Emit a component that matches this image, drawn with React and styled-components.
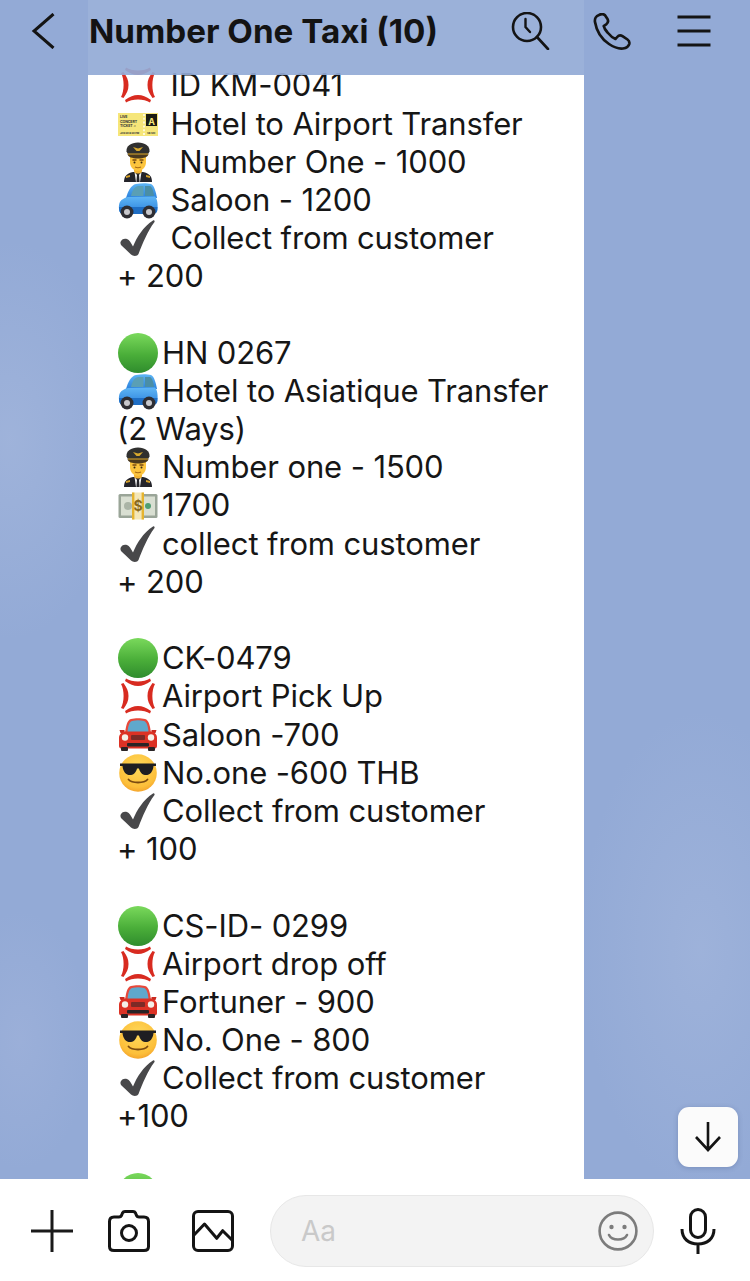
import React from "react";
import styled, { createGlobalStyle } from "styled-components";

const Global = createGlobalStyle`
  html, body { margin: 0; padding: 0; background: #93aad6; }
  * { box-sizing: border-box; }
`;

const Page = styled.div`
  width: 750px;
  height: 1281px;
  display: flex;
  flex-direction: column;
  position: relative;
  overflow: hidden;
  font-family: Inter, "Liberation Sans", sans-serif;
  color: #141414;
  background:
    radial-gradient(ellipse 110px 200px at 10px 440px, rgba(176,192,225,.4), rgba(176,192,225,0)),
    radial-gradient(ellipse 120px 240px at 700px 950px, rgba(176,192,225,.36), rgba(176,192,225,0)),
    radial-gradient(ellipse 70px 130px at 20px 1040px, rgba(170,185,222,.35), rgba(170,185,222,0)),
    #93aad6;
`;

const Header = styled.header`
  height: 75px;
  flex: none;
  display: flex;
  align-items: center;
  padding: 0 39px 13px 28px;
  position: relative;
  z-index: 2;
  background: rgba(147, 170, 214, .92);
`;
const Title = styled.h1`
  margin: 0 0 0 33px;
  flex: 1;
  font-size: 33.2px;
  line-height: 40px;
  font-weight: 700;
  letter-spacing: 0;
  color: #131313;
  white-space: nowrap;
`;
const HeaderActions = styled.div`
  display: flex;
  align-items: center;
`;
const IconBtn = styled.span`
  display: flex;
  flex: none;
  margin-left: ${(p) => p.$gap || 0}px;
  color: #141414;
`;

const Messages = styled.main`
  flex: 1;
  min-height: 0;
  margin-top: -75px;
  overflow: hidden;
  padding-left: 88px;
`;
const Bubble = styled.div`
  width: 496px;
  padding: 66.4px 0 0 29px;
  background: #fff;
`;
const Group = styled.div`
  padding-bottom: 38.2px;
`;
const Line = styled.div`
  height: 38.2px;
  line-height: 38.2px;
  display: flex;
  align-items: center;
  font-size: 31px;
  letter-spacing: -0.12px;
  white-space: pre;
  color: #161616;
`;
const EmojiBox = styled.span`
  display: inline-flex;
  flex: none;
  width: 44px;
  height: 40px;
  margin-left: 1px;
`;

const ScrollDown = styled.button`
  position: absolute;
  right: 12px;
  bottom: 114px;
  width: 60px;
  height: 60px;
  padding: 0;
  border: 0;
  border-radius: 11px;
  background: #fbfbfb;
  box-shadow: 0 1px 5px rgba(40, 60, 110, .25);
  display: flex;
  align-items: center;
  justify-content: center;
`;

const Footer = styled.footer`
  height: 102px;
  flex: none;
  display: flex;
  align-items: flex-start;
  padding: 16px 0 0 31px;
  background: #fff;
  position: relative;
  z-index: 2;
`;
const FooterTools = styled.div`
  display: flex;
  align-items: center;
  height: 72px;
`;
const ComposeBox = styled.div`
  width: 384px;
  height: 72px;
  margin-left: 36px;
  padding: 0 15px 0 30px;
  display: flex;
  align-items: center;
  justify-content: space-between;
  border: 1.5px solid #e7e7e7;
  border-radius: 36px;
  background: #f3f3f3;
`;
const Placeholder = styled.span`
  font-size: 28px;
  color: #c9c9c9;
`;
const MicSlot = styled.div`
  display: flex;
  align-items: center;
  height: 72px;
  margin-left: 26px;
`;

const Anger = () => (
  <svg width="40" height="40" viewBox="0 0 40 40" fill="#d82b20">
    <path d="M8 2.5 C14 6.5 26 6.5 32 2.5 L33 5 C28 8.5 24.5 10 20 10 C15.5 10 12 8.5 7 5Z" />
    <path d="M8 37.5 C14 33.5 26 33.5 32 37.5 L33 35 C28 31.5 24.5 30 20 30 C15.5 30 12 31.5 7 35Z" />
    <path d="M3 8 C6.5 14 6.5 26 3 32 L5.5 33 C9 28 10.5 25 10.5 20 C10.5 15 9 12 5.5 7Z" />
    <path d="M37 8 C33.5 14 33.5 26 37 32 L34.5 33 C31 28 29.5 25 29.5 20 C29.5 15 31 12 34.5 7Z" />
  </svg>
);
const Check = () => (
  <svg width="40" height="40" viewBox="0 0 40 40">
    <path d="M2.5 24 C3.5 21 6.5 20 9 21 C11.5 22 13 25 15 28.5 C19 19 25 9 35 2.5 C36 2 37 3 36.5 4 C29.5 13 24.5 26 20.5 36 C19.5 38.5 15 38.5 13 36.5 C9.5 33 6 30 3 27 C2.5 26 2.3 25 2.5 24Z" fill="#48484a" />
  </svg>
);
const GreenBall = () => (
  <svg width="40" height="40" viewBox="0 0 40 40">
    <defs>
      <linearGradient id="gb" x1="0" y1="0" x2="0" y2="1">
        <stop offset="0" stopColor="#7ad95c" />
        <stop offset=".55" stopColor="#4aae39" />
        <stop offset="1" stopColor="#2f8c2d" />
      </linearGradient>
    </defs>
    <circle cx="20" cy="20" r="20" fill="url(#gb)" />
  </svg>
);
const Ticket = () => (
  <svg width="40" height="40" viewBox="0 0 40 40">
    <rect x="0" y="9" width="40" height="23" fill="#f6e67a" />
    <rect x="28" y="10" width="11" height="12" fill="#1c1c14" />
    <text x="33.5" y="20.5" fontSize="9" fontWeight="700" textAnchor="middle" fill="#f6e67a" fontFamily="Inter, sans-serif">A</text>
    <text x="2" y="14" fontSize="3.6" fontWeight="700" fill="#333" fontFamily="Inter, sans-serif">LIVE</text>
    <text x="2" y="18.5" fontSize="3.6" fontWeight="700" fill="#333" fontFamily="Inter, sans-serif">CONCERT</text>
    <text x="2" y="23" fontSize="3.6" fontWeight="700" fill="#333" fontFamily="Inter, sans-serif">TICKET ♫</text>
    <text x="2" y="29.5" fontSize="2.6" fontWeight="700" fill="#333" fontFamily="Inter, sans-serif">JAN 30 8:30 PM</text>
    <text x="29" y="29.5" fontSize="2.6" fontWeight="700" fill="#333" fontFamily="Inter, sans-serif">V8 S10</text>
    <path d="M26 10V32" stroke="#fff" strokeWidth="1.4" strokeDasharray="2 1.8" />
  </svg>
);
const Pilot = () => (
  <svg width="40" height="40" viewBox="0 0 40 40">
    <path d="M6 40 C6 34 9 31.5 15 30 L25 30 C31 31.5 34 34 34 40Z" fill="#24242a" />
    <path d="M16.5 30 L20 34 L23.5 30 L22 40 H18Z" fill="#f0f0f0" />
    <path d="M19 33h2l.6 7h-3.2z" fill="#24242a" />
    <path d="M28 33l4 1v2l-4-1z" fill="#d4a02a" />
    <path d="M12 33l-4 1v2l4-1z" fill="#d4a02a" />
    <rect x="16" y="25" width="8" height="6.5" rx="3" fill="#f2b230" />
    <path d="M12 13 H28 V20 C28 25.5 24 29 20 29 C16 29 12 25.5 12 20Z" fill="#fcc43e" />
    <path d="M14.5 18h4M21.5 18h4" stroke="#7a4a10" strokeWidth="1.3" />
    <path d="M17 25c2 1 4 1 6 0" stroke="#a86a14" strokeWidth="1.1" fill="none" />
    <circle cx="16.5" cy="20.5" r="1" fill="#3a2a14" /><circle cx="23.5" cy="20.5" r="1" fill="#3a2a14" />
    <path d="M8.5 9.5 C8 4 13 0.5 20 0.5 C27 0.5 32 4 31.5 9.5 L29 14 H11Z" fill="#30302f" />
    <path d="M9.5 12 H30.5 C30 15 26 16.5 20 16.5 C14 16.5 10 15 9.5 12Z" fill="#4c3a1e" />
    <path d="M10 12 H30" stroke="#cf9f2a" strokeWidth="1.1" />
    <path d="M15 5 L20 6.5 L25 5 L21.5 9 H18.5Z" fill="#d8a92e" />
  </svg>
);
const BlueCar = () => (
  <svg width="40" height="40" viewBox="0 0 40 40">
    <defs>
      <linearGradient id="bc" x1="0" y1="0" x2="0" y2="1">
        <stop offset="0" stopColor="#5fb6f5" />
        <stop offset="1" stopColor="#2a80dc" />
      </linearGradient>
    </defs>
    <path d="M8 18 C10 11 13 5 18 4 C23 3 29 3 33 4 C36 5 38 12 39 18Z" fill="url(#bc)" />
    <path d="M13 16 C14 11 16 7 20 6 L25.5 6 V16Z" fill="#5a9fb5" />
    <path d="M27 6 H32 C34.5 7 35.5 12 36 16 H27Z" fill="#4a8ea6" />
    <path d="M1 29 C0.5 23 2 19 10 17 L37 16.5 C39.5 19 40 25 39.5 30 C39 33 37 34 34 34 H5 C3 34 1 32 1 29Z" fill="url(#bc)" />
    <path d="M1 27 H39.5 L39 31 C38 33 37 34 34 34 H5 C3 34 1 32 1 29Z" fill="#1f6ec4" />
    <circle cx="9" cy="32" r="6.5" fill="#2e2e33" /><circle cx="9" cy="32" r="3" fill="#c8c8cc" />
    <circle cx="31" cy="32" r="6.5" fill="#2e2e33" /><circle cx="31" cy="32" r="3" fill="#c8c8cc" />
  </svg>
);
const RedCar = () => (
  <svg width="40" height="40" viewBox="0 0 40 40">
    <path d="M7 18 C8 11 9 5 13 4 C17 3 23 3 27 4 C31 5 32 11 33 18Z" fill="#e8483a" />
    <path d="M9.5 17 C10 12 11 7 14 6 C18 5 22 5 26 6 C29 7 30 12 30.5 17Z" fill="#5fa8cc" />
    <path d="M1.5 15h5v3H2.5zM38.5 15h-5v3h4z" fill="#c92a20" />
    <path d="M1 23 C1 19 4 16.5 8 16.5 H32 C36 16.5 39 19 39 23 V31 C39 33 37.5 33.5 36 33.5 H4 C2.5 33.5 1 33 1 31Z" fill="#dc3225" />
    <circle cx="7" cy="22.5" r="3.2" fill="#f4f0e8" /><circle cx="33" cy="22.5" r="3.2" fill="#f4f0e8" />
    <rect x="13" y="20" width="14" height="5" rx="1" fill="#7d2a26" />
    <rect x="9" y="28" width="22" height="3.6" rx="1" fill="#2a2426" />
    <rect x="3" y="32" width="7" height="4" rx="1" fill="#2a2426" /><rect x="30" y="32" width="7" height="4" rx="1" fill="#2a2426" />
  </svg>
);
const Sunglasses = () => (
  <svg width="40" height="40" viewBox="0 0 40 40">
    <defs>
      <radialGradient id="sg" cx=".5" cy=".35" r=".75">
        <stop offset="0" stopColor="#ffd95a" />
        <stop offset=".7" stopColor="#fcbf3a" />
        <stop offset="1" stopColor="#ef9122" />
      </radialGradient>
    </defs>
    <circle cx="20" cy="20" r="18.8" fill="url(#sg)" />
    <path d="M2 10.5 H38 V13 H35.5 C35 19 31.5 22.5 27 22 C23.5 21.5 21.5 18 21 15.5 H19 C18.5 18 16.5 21.5 13 22 C8.5 22.5 5 19 4.5 13 H2Z" fill="#1e1e22" />
    <path d="M10.5 26.5 C14 30.5 26 30.5 29.5 26.5" fill="none" stroke="#7a4a10" strokeWidth="1.8" strokeLinecap="round" />
  </svg>
);
const Money = () => (
  <svg width="40" height="40" viewBox="0 0 40 40">
    <rect x="0.5" y="8" width="39" height="24" rx="1.5" fill="#9aa598" />
    <rect x="3" y="10.5" width="34" height="19" fill="#d9dfd2" />
    <circle cx="10" cy="20" r="4" fill="#aab4a6" />
    <circle cx="30" cy="20" r="3" fill="#4f9e73" />
    <rect x="14" y="6.5" width="12" height="27" fill="#f4e7b8" />
    <rect x="14" y="6.5" width="2.4" height="27" fill="#e6b42e" /><rect x="23.6" y="6.5" width="2.4" height="27" fill="#e6b42e" />
    <text x="20" y="25" fontSize="14" fontWeight="700" textAnchor="middle" fill="#8a6a1e" fontFamily="Inter, sans-serif">$</text>
  </svg>
);

const icons = { anger: Anger, check: Check, green: GreenBall, ticket: Ticket, pilot: Pilot, blue: BlueCar, red: RedCar, cool: Sunglasses, money: Money };

const groups = [
  [["anger", " ID KM-0041"], ["ticket", " Hotel to Airport Transfer"], ["pilot", "  Number One - 1000"], ["blue", " Saloon - 1200"], ["check", " Collect from customer"], [null, "+ 200"]],
  [["green", "HN 0267"], ["blue", "Hotel to Asiatique Transfer"], [null, "(2 Ways)"], ["pilot", "Number one - 1500"], ["money", "1700"], ["check", "collect from customer"], [null, "+ 200"]],
  [["green", "CK-0479"], ["anger", "Airport Pick Up"], ["red", "Saloon -700"], ["cool", "No.one -600 THB"], ["check", "Collect from customer"], [null, "+ 100"]],
  [["green", "CS-ID- 0299"], ["anger", "Airport drop off"], ["red", "Fortuner - 900"], ["cool", "No. One - 800"], ["check", "Collect from customer"], [null, "+100"]],
  [["green", ""]],
];

export default function App() {
  return (
    <Page>
      <Global />
      <Header>
        <IconBtn>
          <svg width="28" height="36" viewBox="0 0 28 36" fill="none" stroke="currentColor" strokeWidth="3">
            <path d="M25.5 1 L6 18 L25.5 35" />
          </svg>
        </IconBtn>
        <Title>Number One Taxi (10)</Title>
        <HeaderActions>
          <IconBtn>
            <svg width="40" height="38" viewBox="0 0 40 38" fill="none" stroke="currentColor" strokeWidth="2.6" strokeLinecap="round">
              <circle cx="16" cy="15" r="14" />
              <path d="M26 25 L37 37" />
              <path d="M14.5 7 V15 L19 20" strokeWidth="2.4" />
            </svg>
          </IconBtn>
          <IconBtn $gap={42}>
            <svg width="38" height="37" viewBox="0 0 38 37" fill="none" stroke="currentColor" strokeWidth="2.7" strokeLinejoin="round">
              <path d="M6 2 C3 3 1.5 6 2 9 C3.5 18 8.5 26 16 31 C20 33.7 26 36 30 35.5 C33 35 35.6 33.5 36.3 30.8 C36.6 29 36 27.5 34.5 26.5 L29.5 23.2 C27.7 22 25.6 22.3 24.2 24 L22.5 26 C20 25 17 22.5 14.5 19.5 C12.3 17 11 14.5 10.7 13 L13.2 11.3 C15 10 15.5 8 14.5 6 L12 2.3 C10.7 1 8 1 6 2Z" />
            </svg>
          </IconBtn>
          <IconBtn $gap={46}>
            <svg width="34" height="32" viewBox="0 0 34 32" fill="none" stroke="currentColor" strokeWidth="3.2">
              <path d="M0.5 2 H33.5 M0.5 16 H33.5 M0.5 30 H33.5" />
            </svg>
          </IconBtn>
        </HeaderActions>
      </Header>
      <Messages>
        <Bubble>
          {groups.map((g, i) => (
            <Group key={i}>
              {g.map(([icon, text], j) => {
                const I = icons[icon];
                return (
                  <Line key={j}>
                    {I && (
                      <EmojiBox>
                        <I />
                      </EmojiBox>
                    )}
                    {text}
                  </Line>
                );
              })}
            </Group>
          ))}
        </Bubble>
      </Messages>
      <ScrollDown aria-label="Scroll down">
        <svg width="28" height="30" viewBox="0 0 28 30" fill="none" stroke="#141414" strokeWidth="2.6">
          <path d="M14 0 V28 M2 15 L14 28 L26 15" />
        </svg>
      </ScrollDown>
      <Footer>
        <FooterTools>
          <IconBtn>
            <svg width="42" height="42" viewBox="0 0 42 42" fill="none" stroke="#1a1a1a" strokeWidth="3">
              <path d="M0 21 H42 M21 0 V42" />
            </svg>
          </IconBtn>
          <IconBtn $gap={35}>
            <svg width="42" height="42" viewBox="0 0 42 42" fill="none" stroke="currentColor" strokeWidth="3" strokeLinejoin="round">
              <path d="M6 7 H11 C12 7 13 6.5 13.5 5.5 L14.5 3 C15 2 15.5 1.5 17 1.5 H25 C26.5 1.5 27 2 27.5 3 L28.5 5.5 C29 6.5 30 7 31 7 H36 C39 7 40.5 8.5 40.5 11.5 V36.5 C40.5 39.5 39 40.5 36 40.5 H6 C3 40.5 1.5 39.5 1.5 36.5 V11.5 C1.5 8.5 3 7 6 7Z" />
              <circle cx="21" cy="23" r="7.5" />
            </svg>
          </IconBtn>
          <IconBtn $gap={42}>
            <svg width="42" height="42" viewBox="0 0 42 42" fill="none" stroke="currentColor" strokeWidth="3" strokeLinejoin="round">
              <rect x="1.5" y="1.5" width="39" height="39" rx="4.5" />
              <path d="M2 25 L12.5 14 L24.7 28.3 L30.7 20.7 L40 30" />
            </svg>
          </IconBtn>
        </FooterTools>
        <ComposeBox>
          <Placeholder>Aa</Placeholder>
          <svg width="40" height="40" viewBox="0 0 40 40" fill="none" stroke="#7c7c7c" strokeWidth="2.6">
            <circle cx="20" cy="20" r="18.4" />
            <circle cx="13.5" cy="16" r="2.2" fill="#7c7c7c" stroke="none" />
            <circle cx="26.5" cy="16" r="2.2" fill="#7c7c7c" stroke="none" />
            <path d="M11 24 C14 30 26 30 29 24" strokeLinecap="round" />
          </svg>
        </ComposeBox>
        <MicSlot>
          <svg width="36" height="46" viewBox="0 0 36 46" fill="none" stroke="#141414" strokeWidth="3">
            <rect x="10.5" y="1.5" width="15" height="28" rx="7.5" />
            <path d="M2 21 C2 31 9 36 18 36 C27 36 34 31 34 21 M18 36 V46" />
          </svg>
        </MicSlot>
      </Footer>
    </Page>
  );
}
